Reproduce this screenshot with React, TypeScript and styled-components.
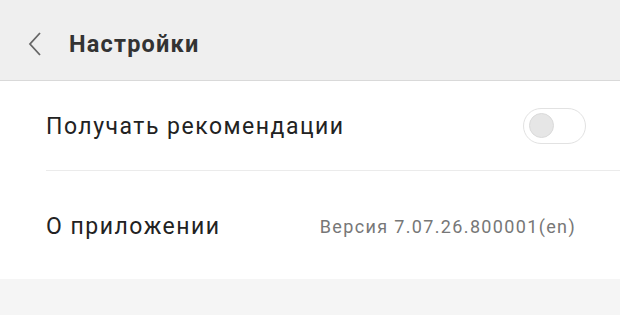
import React from "react";
import styled, { createGlobalStyle } from "styled-components";

const Global = createGlobalStyle`
  html, body { margin: 0; padding: 0; }
  body { background: #f5f5f5; font-family: Roboto, "Noto Sans", sans-serif; }
`;

const Page = styled.div`
  width: 620px;
  height: 315px;
  background: #f5f5f5;
  overflow: hidden;
`;

const Header = styled.header`
  height: 81px;
  padding-top: 7px;
  box-sizing: border-box;
  background: #efefef;
  border-bottom: 1px solid #d9d9d9;
  display: flex;
  align-items: center;
`;

const BackButton = styled.button`
  border: none;
  background: transparent;
  padding: 0;
  margin-left: 27px;
  width: 16px;
  height: 24px;
  display: flex;
  align-items: center;
  justify-content: center;
`;

const Title = styled.h1`
  margin: 0 0 0 26px;
  font-size: 23.5px;
  font-weight: 700;
  color: #333;
  letter-spacing: 1.2px;
`;

const List = styled.div`
  background: #fff;
`;

const Row = styled.div<{ $h: number; $divider?: boolean }>`
  height: ${(p) => p.$h}px;
  margin-left: 46px;
  padding-right: 34px;
  padding-top: 2px;
  display: flex;
  align-items: center;
  justify-content: space-between;
  border-bottom: ${(p) => (p.$divider ? "1px solid #ebebeb" : "none")};
  box-sizing: border-box;
`;

const Label = styled.span`
  font-size: 23px;
  color: #222;
  letter-spacing: 1.5px;
`;

const Value = styled.span`
  font-size: 18px;
  color: #777;
  letter-spacing: 1.35px;
  margin-right: 10px;
`;

const Toggle = styled.div`
  width: 63px;
  height: 36px;
  margin-top: -2px;
  border: 1px solid #e2e2e2;
  border-radius: 18px;
  box-sizing: border-box;
  display: flex;
  align-items: center;
  padding-left: 5px;
`;

const Knob = styled.div`
  width: 25px;
  height: 25px;
  border-radius: 50%;
  background: #e6e6e6;
  border: 1px solid #dadada;
  box-sizing: border-box;
`;

export default function App() {
  return (
    <Page>
      <Global />
      <Header>
        <BackButton aria-label="Назад">
          <svg width="16" height="24" viewBox="0 0 16 24">
            <path d="M13 1 L3 12 L13 23" fill="none" stroke="#666" strokeWidth="1.8" strokeLinejoin="miter" />
          </svg>
        </BackButton>
        <Title>Настройки</Title>
      </Header>
      <List>
        <Row $h={90} $divider>
          <Label>Получать рекомендации</Label>
          <Toggle>
            <Knob />
          </Toggle>
        </Row>
        <Row $h={108}>
          <Label>О приложении</Label>
          <Value>Версия 7.07.26.800001(en)</Value>
        </Row>
      </List>
    </Page>
  );
}
